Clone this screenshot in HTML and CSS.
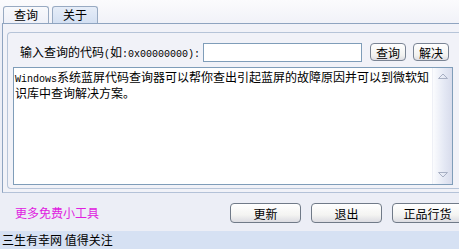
FILE: index.html
```html
<!DOCTYPE html>
<html>
<head>
<meta charset="utf-8">
<link rel="stylesheet" href="styles.css">
</head>
<body>
<div class="window">
  <div class="tabs">
    <div class="tab active">查询</div>
    <div class="tab">关于</div>
  </div>
  <div class="panel">
    <div class="group">
      <div class="row">
        <span class="label">输入查询的代码<span class="asc">(</span>如<span class="asc">:0x00000000):</span></span>
        <div class="input"></div>
        <button class="sbtn first">查询</button>
        <button class="sbtn">解决</button>
      </div>
      <div class="textarea">
        <div class="text"><span class="asc">Windows</span>系统蓝屏代码查询器可以帮你查出引起蓝屏的故障原因并可以到微软知识库中查询解决方案。</div>
        <div class="scrollbar">
          <svg class="arrow" width="16" height="12" viewBox="0 0 16 12"><path d="M3.5 8.5 L8 4 L12.5 8.5 Z" fill="none" stroke="#a8b0c4" stroke-width="1"/></svg>
          <svg class="arrow" width="16" height="12" viewBox="0 0 16 12"><path d="M3.5 3.5 L8 8 L12.5 3.5 Z" fill="none" stroke="#a8b0c4" stroke-width="1"/></svg>
        </div>
      </div>
    </div>
  </div>
  <div class="footer">
    <span class="more">更多免费小工具</span>
    <div class="btns">
      <button class="btn">更新</button>
      <button class="btn">退出</button>
      <button class="btn">正品行货</button>
    </div>
  </div>
  <div class="status">三生有幸网 值得关注</div>
</div>
</body>
</html>
```
FILE: styles.css
```css
html, body {
  margin: 0;
  padding: 0;
  overflow: hidden;
  width: 459px;
  height: 249px;
}
body {
  font-family: "Noto Sans CJK SC", "Liberation Sans", sans-serif;
  font-size: 12px;
  color: #000;
  background: #eceef6;
}
.window {
  width: 470px;
  height: 249px;
  display: flex;
  flex-direction: column;
  background: #eceef6;
}
.asc {
  font-family: "Liberation Mono", monospace;
  font-size: 10px;
}
.tabs {
  height: 23px;
  box-sizing: border-box;
  padding: 6px 0 0 3px;
  display: flex;
  gap: 3px;
  background: linear-gradient(#fbfbfd, #f1f2f8);
}
.tab {
  width: 46px;
  height: 17px;
  box-sizing: border-box;
  border: 1px solid #98aac2;
  border-bottom: none;
  border-radius: 3px 3px 0 0;
  text-align: center;
  line-height: 16px;
  font-size: 12px;
  background: linear-gradient(#e6edf8, #d4e0f2);
}
.tab.active {
  background: linear-gradient(#f8f9fc, #eef0f8);
}
.panel {
  height: 170px;
  box-sizing: border-box;
  margin-left: 2px;
  border-top: 1px solid #8fa4c0;
  border-left: 1px solid #8fa4c0;
  border-bottom: 1px solid #b4c2d8;
  background: #f1f2f8;
  padding: 8px 0 0 4px;
}
.group {
  height: 157px;
  box-sizing: border-box;
  border: 1px solid #b6c4d8;
  border-right: none;
  border-radius: 4px 0 0 4px;
  padding: 10px 0 0 5px;
}
.row {
  display: flex;
  align-items: center;
  height: 19px;
  padding-left: 7px;
}
.label {
  width: 183px;
  white-space: nowrap;
  line-height: 19px;
}
.input {
  width: 159px;
  height: 19px;
  box-sizing: border-box;
  border: 1px solid #7f9db9;
  background: #fff;
}
.sbtn {
  height: 18px;
  width: 36px;
  box-sizing: border-box;
  padding: 0;
  margin-left: 7px;
  border: 1px solid #7a8494;
  border-radius: 4px;
  background: linear-gradient(#ffffff, #f2f2f0 70%, #dedee4);
  font-family: "Noto Sans CJK SC", sans-serif;
  font-size: 12px;
  line-height: 15px;
  color: #000;
  align-self: flex-start;
}
.sbtn.first {
  margin-left: 8px;
}
.textarea {
  margin-top: 5px;
  width: 440px;
  height: 118px;
  box-sizing: border-box;
  border: 1px solid #7f9db9;
  background: #fff;
  display: flex;
}
.text {
  flex: 1;
  padding: 2px 0 0 1px;
  line-height: 13px;
  font-size: 12px;
}
.scrollbar {
  width: 19px;
  background: linear-gradient(90deg, #fbfcfe, #e4e8f4 60%, #d8dcec);
  border-left: 1px solid #eef0f6;
  display: flex;
  flex-direction: column;
  justify-content: space-between;
  align-items: center;
  padding: 2px 0 3px;
}
.arrow {
  display: block;
}
.footer {
  height: 38px;
  display: flex;
  align-items: flex-start;
  padding: 9px 0 0 15px;
  box-sizing: border-box;
  background: #eceef6;
}
.more {
  color: #e020e0;
  line-height: 22px;
  width: 215px;
}
.btns {
  display: flex;
  gap: 10px;
  margin-top: 1px;
}
.btn {
  width: 71px;
  height: 20px;
  box-sizing: border-box;
  padding: 0;
  border: 1px solid #707a88;
  border-radius: 4px;
  background: linear-gradient(#ffffff, #f4f4f2 60%, #dcdce2);
  font-family: "Noto Sans CJK SC", sans-serif;
  font-size: 12px;
  line-height: 17px;
  color: #000;
}
.status {
  flex: 1;
  background: #d6e1f3;
  padding-left: 2px;
  line-height: 18px;
  font-size: 12px;
}
```
